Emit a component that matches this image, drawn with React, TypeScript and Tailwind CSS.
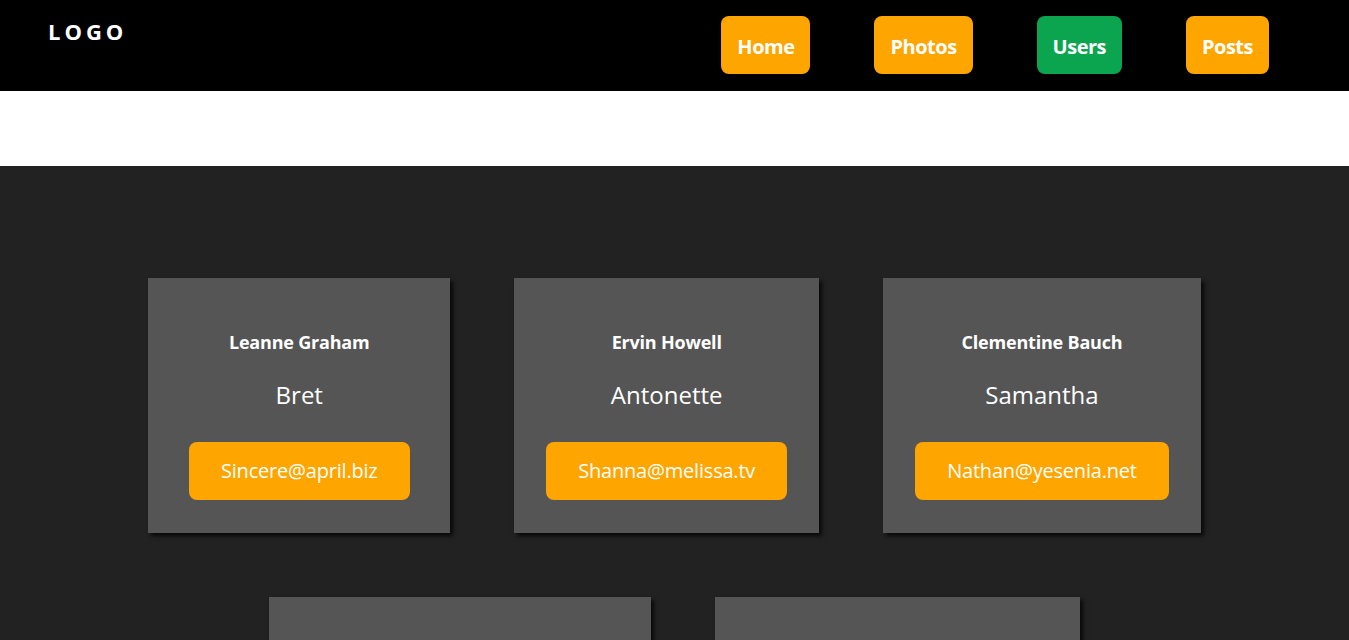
import React from "react";

const users = [
    { name: "Leanne Graham", username: "Bret", email: "Sincere@april.biz" },
    { name: "Ervin Howell", username: "Antonette", email: "Shanna@melissa.tv" },
    { name: "Clementine Bauch", username: "Samantha", email: "Nathan@yesenia.net" },
    { name: "Patricia Lebsack", username: "Karianne", email: "Julianne.OConner@kory.org" },
    { name: "Chelsey Dietrich", username: "Kamren", email: "Lucio_Hettinger@annie.ca" },
    { name: "Mrs. Dennis Schulist", username: "Leopoldo_Corkery", email: "Karley_Dach@jasper.info" },
    { name: "Kurtis Weissnat", username: "Elwyn.Skiles", email: "Telly.Hoeger@billy.biz" },
    { name: "Nicholas Runolfsdottir V", username: "Maxime_Nienow", email: "Sherwood@rosamond.me" },
    { name: "Glenna Reichert", username: "Delphine", email: "Chaim_McDermott@dana.io" },
    { name: "Clementina DuBuque", username: "Moriah.Stanton", email: "Rey.Padberg@karina.biz" },
];

const links = ["Home", "Photos", "Users", "Posts"];

const UserCard: React.FC<{ name: string; username: string; email: string }> = ({ name, username, email }) => (
    <div className="m-8 min-w-[302px] bg-[#555555] px-8 pt-8 pb-[33px] flex flex-col items-center text-white shadow-[3px_3px_4px_rgba(0,0,0,0.75)]">
        <h3 className="mt-5 text-[18px] leading-6 font-bold tracking-[-0.2px]">{name}</h3>
        <p className="mt-[25px] text-2xl leading-8">{username}</p>
        <a className="mt-[31px] h-[58px] px-8 flex items-center rounded-lg bg-[#ffa500] text-[20px] tracking-[-0.2px] whitespace-nowrap">
            {email}
        </a>
    </div>
);

export default function App() {
    return (
        <div className="min-h-screen bg-white" style={{ fontFamily: '"Open Sans", "Noto Sans", sans-serif' }}>
            <header className="h-[91px] bg-black flex justify-between items-start px-12">
                <div className="pt-[18px] text-[22px] leading-[26px] font-bold tracking-[4px] text-white">LOGO</div>
                <ul className="flex my-4">
                    {links.map((l) => (
                        <li key={l}>
                            <a
                                className={
                                    "mx-8 h-[58px] px-4 pt-[3px] flex items-center rounded-lg text-[20px] font-bold tracking-[-0.5px] text-white " +
                                    (l === "Users" ? "bg-[#0aa54e]" : "bg-[#ffa500]")
                                }
                            >
                                {l}
                            </a>
                        </li>
                    ))}
                </ul>
            </header>

            <div className="h-[75px]" />

            <main className="bg-[#222222] p-20 flex flex-wrap justify-center">
                {users.map((u, idx) => (
                    <UserCard key={idx} {...u} />
                ))}
            </main>
        </div>
    );
}
